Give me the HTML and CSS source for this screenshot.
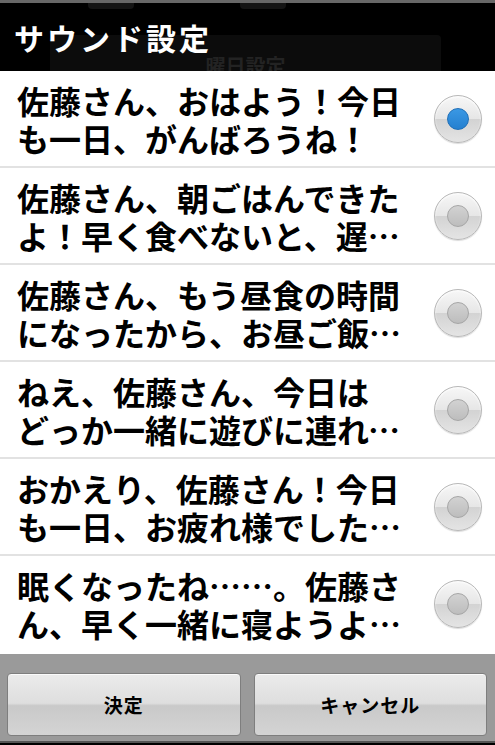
FILE: index.html
```html
<!DOCTYPE html>
<html lang="ja">

<head>
  <meta charset="UTF-8">
  <meta name="viewport" content="width=device-width, initial-scale=1.0">
  <title>サウンド設定</title>
  <link rel="stylesheet" href="styles.css">
</head>

<body>
  <div class="topline"></div>
  <div class="header">
    <!-- dimmed screen behind the dialog -->
    <div class="ghost ghost-tab1"></div>
    <div class="ghost ghost-tab2"></div>
    <div class="ghost ghost-panel">曜日設定</div>
    <h1 class="title">サウンド設定</h1>
  </div>

  <ul class="choices">
    <li class="choice">
      <span class="label">佐藤さん、おはよう！今日も一日、がんばろうね！</span>
      <span class="radio checked"></span>
    </li>
    <li class="choice">
      <span class="label">佐藤さん、朝ごはんできたよ！早く食べないと、遅刻しちゃうよ！</span>
      <span class="radio"></span>
    </li>
    <li class="choice">
      <span class="label">佐藤さん、もう昼食の時間になったから、お昼ご飯にしようよ！</span>
      <span class="radio"></span>
    </li>
    <li class="choice">
      <span class="label">ねえ、佐藤さん、今日は<br>どっか一緒に遊びに連れてってよ！</span>
      <span class="radio"></span>
    </li>
    <li class="choice">
      <span class="label">おかえり、佐藤さん！今日も一日、お疲れ様でした。ゆっくり休んでね！</span>
      <span class="radio"></span>
    </li>
    <li class="choice">
      <span class="label">眠くなったね……。佐藤さん、早く一緒に寝ようよ。おやすみなさい！</span>
      <span class="radio"></span>
    </li>
  </ul>

  <div class="buttons">
    <button class="btn" type="button">決定</button>
    <button class="btn" type="button">キャンセル</button>
  </div>
</body>

</html>
```

FILE: styles.css
```css
body {
  margin: 0;
  width: 495px;
  height: 745px;
  display: flex;
  flex-direction: column;
  background-color: #000;
  font-family: "Noto Sans CJK JP", sans-serif;
  font-weight: bold;
  overflow: hidden;
}

.topline {
  height: 3px;
  background-color: #676767;
}

.header {
  position: relative;
  height: 68px;
  background-color: #000;
  overflow: hidden;
}

.ghost {
  position: absolute;
  background-color: #141414;
  border-radius: 4px;
}

.ghost-tab1 {
  left: 88px;
  top: 0;
  width: 46px;
  height: 6px;
  border-radius: 0 0 4px 4px;
}

.ghost-tab2 {
  left: 240px;
  top: 0;
  width: 46px;
  height: 6px;
  border-radius: 0 0 4px 4px;
}

.ghost-panel {
  left: 50px;
  top: 32px;
  width: 391px;
  height: 60px;
  background-color: #0c0c0c;
  color: #232323;
  font-size: 20px;
  line-height: 20px;
  text-align: center;
  padding-top: 21px;
  box-sizing: border-box;
}

.title {
  position: relative;
  margin: 0;
  padding-left: 14px;
  color: #fff;
  font-size: 30px;
  line-height: 68px;
  letter-spacing: 3px;
}

.choices {
  list-style: none;
  margin: 0;
  padding: 0;
  height: 583px;
  background-color: #fff;
}

.choice {
  display: flex;
  align-items: center;
  height: 95px;
  padding-left: 17px;
  border-bottom: 2px solid #e2e2e2;
}

.choice:last-child {
  border-bottom: none;
}

.label {
  width: 390px;
  font-size: 32px;
  line-height: 38px;
  color: #000;
  display: -webkit-box;
  -webkit-box-orient: vertical;
  -webkit-line-clamp: 2;
  overflow: hidden;
  word-break: break-all;
}

.radio {
  position: relative;
  margin-left: 27px;
  width: 46px;
  height: 46px;
  border-radius: 50%;
  border: 1px solid #b8b8b8;
  background: linear-gradient(to bottom, #f7f7f7 0%, #e6e6e6 50%, #d3d3d3 51%, #e4e4e4 100%);
  box-shadow: inset 0 1px 2px #fff, 0 1px 1px rgba(0, 0, 0, 0.15);
}

.radio::after {
  content: "";
  position: absolute;
  left: 12px;
  top: 12px;
  width: 20px;
  height: 20px;
  border-radius: 50%;
  border: 1px solid #a6a6a6;
  background: linear-gradient(to bottom, #d2d2d2, #bdbdbd);
}

.radio.checked::after {
  border-color: #1f6fb8;
  background: linear-gradient(to bottom, #3a98e4, #2580d0);
}

.buttons {
  display: flex;
  gap: 13px;
  height: 89px;
  padding: 19px 8px 7px 7px;
  box-sizing: border-box;
  background-color: #9a9a9a;
  border-bottom: 2px solid #555;
}

.btn {
  flex: 1;
  height: 63px;
  border: 1px solid #7e7e7e;
  border-radius: 4px;
  background: linear-gradient(to bottom, #ebebeb 0%, #dedede 48%, #c9c9c9 52%, #d4d4d4 100%);
  box-shadow: inset 0 1px 0 #fafafa;
  font-family: "Noto Sans CJK JP", sans-serif;
  font-weight: bold;
  font-size: 19px;
  color: #000;
  letter-spacing: 1px;
}
```
